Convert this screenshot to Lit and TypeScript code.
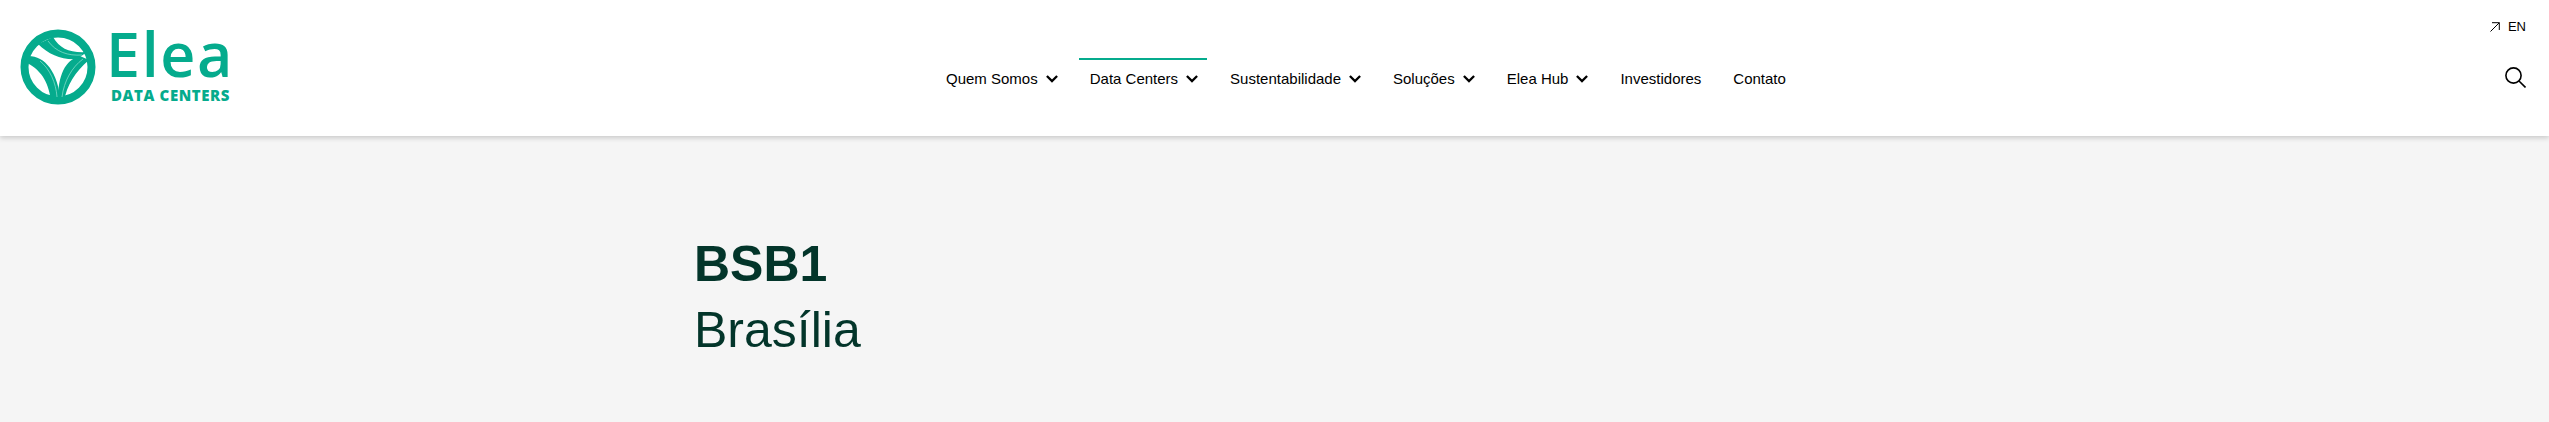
import { LitElement, html, css, svg } from "lit";
import { customElement } from "lit/decorators.js";

const chevron = html`<svg class="chev" viewBox="0 0 12 8" width="12" height="8"><path d="M.9 1 6 6.1 11.100 1" fill="none" stroke="#000" stroke-width="2.3"/></svg>`;

const items: { label: string; caret: boolean; active?: boolean }[] = [
  { label: "Quem Somos", caret: true },
  { label: "Data Centers", caret: true, active: true },
  { label: "Sustentabilidade", caret: true },
  { label: "Soluções", caret: true },
  { label: "Elea Hub", caret: true },
  { label: "Investidores", caret: false },
  { label: "Contato", caret: false },
];

const mark = svg`<svg class="mark" viewBox="0 0 76 76" width="76" height="76">
  <circle cx="38" cy="38" r="33.5" fill="none" stroke="#05ab8d" stroke-width="8"/>
  <path fill="#05ab8d" d="M18 15C29 26 42 31 57 30L67 23C50 24 40 20 33 8Z"/>
  <path fill="#05ab8d" d="M7 27C24 26 38 42 40.500 72H31C29 56 23 42 7 34Z"/>
  <path fill="#05ab8d" d="M60 27C45 31 38 46 38 72H44C47 56 55 43 69 31Z"/>
  <path fill="none" stroke="#7fdcc8" stroke-width=".8" d="M28 12C36 23 48 27 62 26M63 30C52 38 44 52 42 68M20 32C30 40 36 54 37 68"/>
</svg>`;

@customElement("app-root")
export class AppRoot extends LitElement {
  static styles = css`
    :host { display: block; height: 422px; background: #f5f5f5; font-family: "Liberation Sans", Arial, sans-serif; overflow: hidden; }
    header { height: 136px; background: #fff; box-shadow: 0 2px 5px rgba(0,0,0,.18); display: flex; position: relative; }
    .logo { width: 935px; padding: 29px 0 0 20px; box-sizing: border-box; display: flex; gap: 11px; align-items: flex-start; flex: none; }
    .mark { flex: none; }
    .word { color: #05ab8d; font-family: "Open Sans", sans-serif; display: flex; flex-direction: column; }
    .elea { font-size: 61px; font-weight: 600; line-height: 50px; letter-spacing: 1.6px; margin-left: -1px; }
    .dc { font-size: 15px; font-weight: 800; line-height: 14px; margin: 9px 0 0 4px; letter-spacing: .6px; white-space: nowrap; }
    nav { display: flex; gap: 12px; align-items: flex-start; padding-top: 58px; flex: none; }
    .item { height: 39px; padding: 0 9px 0 11px; border-top: 2px solid transparent; display: flex; align-items: center; gap: 8px; font-size: 15px; color: #000; white-space: nowrap; box-sizing: border-box; }
    .item.active { border-top-color: #05ab8d; }
    .tools { margin-left: auto; padding: 19px 23px 0 0; display: flex; flex-direction: column; align-items: flex-end; gap: 33px; }
    .lang { display: flex; align-items: center; gap: 8px; font-size: 13px; line-height: 15px; color: #000; }
    main { padding: 95px 0 0 694px; color: #03352a; font-size: 50px; line-height: 66px; }
    h1 { margin: 0; font-size: 50px; font-weight: 700; line-height: 66px; }
    p { margin: 0; }
  `;
  render() {
    return html`
      <header>
        <div class="logo">${mark}<div class="word"><span class="elea">Elea</span><span class="dc">DATA CENTERS</span></div></div>
        <nav>${items.map(i => html`<div class="item ${i.active ? "active" : ""}">${i.label}${i.caret ? chevron : ""}</div>`)}</nav>
        <div class="tools">
          <div class="lang"><svg width="10" height="10" viewBox="0 0 10 10"><path d="M.5 9.500 9.300.7M2 .7h7.300V8" fill="none" stroke="#000" stroke-width="1"/></svg>EN</div>
          <svg width="21" height="21" viewBox="0 0 21 21"><circle cx="8.500" cy="8.500" r="7.600" fill="none" stroke="#000" stroke-width="1.600"/><path d="M14 14 20.500 20.500" stroke="#000" stroke-width="1.600"/></svg>
        </div>
      </header>
      <main><h1>BSB1</h1><p>Brasília</p></main>
    `;
  }
}
